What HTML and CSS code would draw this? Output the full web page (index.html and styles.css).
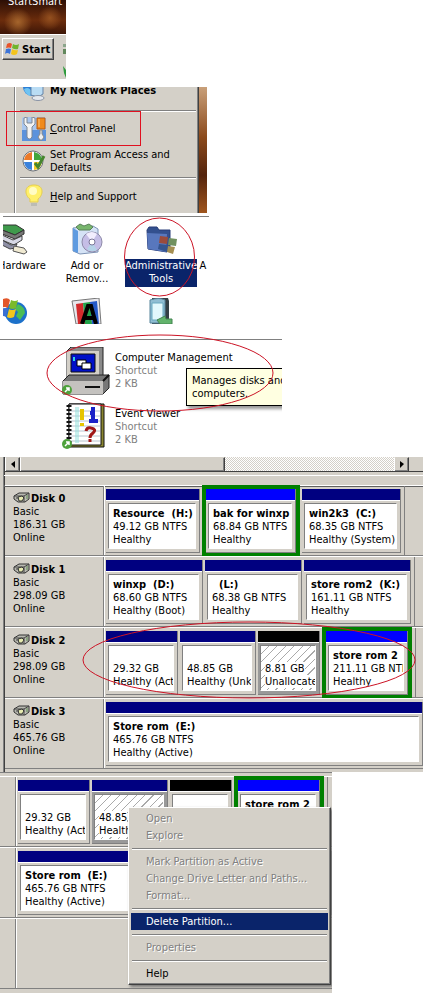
FILE: index.html
```html
<!DOCTYPE html>
<html lang="en">
<head>
	<meta charset="UTF-8">
	<meta name="viewport" content="width=device-width, initial-scale=1">
	<title>Delete Partition</title>
	<link rel="stylesheet" href="styles.css">
</head>
<body>
	<svg class="defs" aria-hidden="true">
		<symbol id="disk" viewBox="0 0 17 11">
			<path d="M1 4L6 1h10v6l-4 3H5L1 7z" fill="#b8b8b0" stroke="#333"/>
			<path d="M1 4h10l5-3M11 4v6M3 6h5" fill="none" stroke="#444"/>
			<path d="M5 5l4-1 2 2-2 3H6z" fill="#e6eab0" stroke="#333"/>
			<path d="M14 3v4" stroke="#5c8a50"/>
		</symbol>
		<symbol id="shortcut" viewBox="0 0 10 10">
			<circle cx="5" cy="5" r="5" fill="#4ea23c"/>
			<path d="M3 7l4-4M4 3h3v3" fill="none" stroke="#fff" stroke-width="1.5"/>
		</symbol>
		<symbol id="flag" viewBox="0 0 16 14">
			<path d="M3 2q3-2 5 0L7 6Q5 5 2 6z" fill="#e8542c"/>
			<path d="M9 2q3 2 6 0l-1 5q-3 1-6-1z" fill="#6fb52c"/>
			<path d="M2 7q3-1 5 0l-1 5q-3-2-5 0z" fill="#3d74d8"/>
			<path d="M8 7q3 2 6 1l-1 4q-3 2-6 0z" fill="#f4c41c"/>
		</symbol>
	</svg>

	<!-- desktop and taskbar -->
	<section class="desktop">
		<div class="wallpaper"><span>StartSmart</span></div>
		<div class="taskbar">
			<button class="start"><svg width="16" height="14"><use href="#flag"/></svg>Start</button>
			<svg class="tray" width="4" height="38" viewBox="0 0 4 38">
				<path d="M1 2h3v3H1z" fill="#8ba58b"/><path d="M1 7h3v5H1z" fill="#62885c"/>
				<path d="M1 24l3 4v8L2 31z" fill="#2f9b3e"/>
			</svg>
		</div>
	</section>

	<!-- start menu -->
	<section class="startmenu">
		<nav class="places">
			<a class="network" href="#">
				<svg width="24" height="24" viewBox="0 0 24 24">
					<circle cx="10" cy="9" r="9" fill="#2c7fd6"/><path d="M2 11q5-3 8 3l-2 4Q3 16 2 11z" fill="#6fc3f2"/>
					<path d="M9 8h12v8l-5 3-7-2z" fill="#b9dcf4" stroke="#6483a8"/>
					<ellipse cx="16" cy="20" rx="6" ry="2.500" fill="#e4e8ee" stroke="#8a94a6"/>
				</svg>
				<span>My Network Places</span>
			</a>
			<hr>
			<a class="panel" href="#">
				<svg width="24" height="24" viewBox="0 0 24 24">
					<rect width="24" height="24" rx="2" fill="#a9c6ee"/><path d="M0 13h24v11H0z" fill="#5b92dc"/>
					<path d="M2 1v6l3 3v10q2 4 5 0V10l3-3V1l-3-1v6H5V0z" fill="#f3f3f3" stroke="#7f8894"/>
					<path d="M15 1h8v11h-8z" fill="#f08a1c" stroke="#b95d10"/><path d="M17 2v8" stroke="#ffc577"/>
					<path d="M18 13h2v4l2 3-2 3h-2l-2-3 2-3z" fill="#eee" stroke="#8a8a8a"/>
				</svg>
				<span><u>C</u>ontrol Panel</span>
			</a>
			<a class="access" href="#">
				<svg width="24" height="24" viewBox="0 0 24 24">
					<circle cx="11" cy="12" r="10" fill="#fff" stroke="#6b7076"/>
					<path d="M10 3v8H2q1-7 8-8z" fill="#ec7a28"/><path d="M12 3v8h8q-1-7-8-8z" fill="#40a63c"/>
					<path d="M2 13h8v8q-7-1-8-8z" fill="#3a82dc"/><path d="M12 13h8q-1 7-8 8z" fill="#f5c928"/>
					<path d="M13 14l3 4 6-11" fill="none" stroke="#46852f" stroke-width="3"/>
				</svg>
				<span>Set Program Access and Defaults</span>
			</a>
			<hr>
			<a class="help" href="#">
				<svg width="24" height="24" viewBox="0 0 24 24">
					<path d="M12 1c-11 0-9 11-4 14v3h8v-3c5-3 7-14-4-14z" fill="#fff06a" stroke="#e5cd4e"/>
					<circle cx="11" cy="7" r="4" fill="#fffcc4"/><path d="M9 19h6v3H9z" fill="#bcbcb4"/>
				</svg>
				<span><u>H</u>elp and Support</span>
			</a>
		</nav>
		<span class="mark-box"></span>
	</section>

	<!-- control panel folder -->
	<section class="folder">
		<div class="icons">
			<a class="item first" href="#">
				<svg width="32" height="32" viewBox="0 0 32 32">
					<path d="M4 2h14l8 5-9 5L4 7z" fill="#3f9a4c" stroke="#333"/><path d="M4 7l13 5 9-5v4l-9 5-13-5z" fill="#777" stroke="#333"/>
					<path d="M4 12l11 5 9-4v4l-8 5-12-5z" fill="#d7d8e5" stroke="#444"/>
					<path d="M4 17l9 5 6-1-2 4-5 1-8-4z" fill="#8f90a6" stroke="#444"/>
					<path d="M16 23l10 2 3 4-3 2-11-3z" fill="#f0ead2" stroke="#555"/>
				</svg>
				<span>Hardware</span>
			</a>
			<a class="item" href="#">
				<svg width="32" height="32" viewBox="0 0 32 32">
					<path d="M2 5l20-2 5 3v23L9 31l-7-3z" fill="#d5e3f6" stroke="#7d93b5"/><path d="M2 5l5 3v22l-5-2z" fill="#5f9be0"/>
					<path d="M5 4l4-3 4 2 5-2 4 3-3 3H8z" fill="#78b66d" stroke="#5a815a"/>
					<circle cx="21" cy="19" r="10" fill="#c5bee6" stroke="#8d89a8"/><path d="M21 19l-6-8q6-4 11 0z" fill="#f2eefe"/><path d="M21 19l5 8q-6 3-10-1z" fill="#b5d3e8"/>
					<circle cx="21" cy="19" r="3" fill="#fff" stroke="#7b7799"/>
				</svg>
				<span>Add or Remov...</span>
			</a>
			<a class="item wide" href="#">
				<svg width="32" height="32" viewBox="0 0 32 32">
					<path d="M2 7l2-3h8l2 3h11v19l-3 3L3 26z" fill="#33508f" stroke="#293d78"/><path d="M2 10l20 1-1 18-18-3z" fill="#5877bd"/>
					<path d="M15 13l8 1-1 7-8-1z" fill="#9a4b3c"/><path d="M24 15l8 1-1 7-8-1z" fill="#71915f"/>
					<path d="M14 21l8 1v7l-9-3z" fill="#35558f"/><path d="M23 23l7 1-2 7-6-2z" fill="#a58f52"/>
				</svg>
				<span class="selected">Administrative Tools</span>
			</a>
			<span class="next">A</span>
			<svg class="first" width="32" height="26" viewBox="0 0 32 26">
				<circle cx="17" cy="15" r="11" fill="#1c71ca"/><path d="M19 6q7 3 7 9l-5 7-4-4 2-4-3-3z" fill="#4bbd55"/>
				<path d="M4 1q5-2 7 1l-2 8q-3-2-7 0z" fill="#e2562a"/><path d="M12 2q4 2 7 0l-2 8q-3 2-7 0z" fill="#7aba2b"/>
				<path d="M2 11q5-2 7 0l-2 8q-3-2-6 0z" fill="#3a70d4"/><path d="M10 11q3 2 7 0l-2 8q-4 2-7 0z" fill="#f2c61d"/>
			</svg>
			<svg width="32" height="26" viewBox="0 0 32 26">
				<path d="M1 3l27-3 2 26H5z" fill="#e7e7ec" stroke="#777"/><path d="M5 6l7-1 2 21H7z" fill="#d32a2c"/>
				<path d="M12 5l7-1 2 22h-7z" fill="#22a34a"/><path d="M19 4l7-1 2 23h-7z" fill="#2459c8"/>
				<path d="M11 26l6-18h3l5 18M14 20h9" fill="none" stroke="#000" stroke-width="4"/>
			</svg>
			<svg width="32" height="26" viewBox="0 0 32 26">
				<path d="M7 0h16l1 3v23H7z" fill="#333f44"/><path d="M5 2q9-3 15 0v23H5z" fill="#8fbdd2" stroke="#57849b"/>
				<path d="M7 5h11v17H7z" fill="#e2f8fc" stroke="#69a9c0"/><path d="M12 22l8-4 1 3h6v5H15z" fill="#62b36c" stroke="#438450"/>
			</svg>
		</div>
		<svg class="mark-ring ring-tools" viewBox="0 0 72 80"><ellipse cx="36" cy="40" rx="35" ry="39"/></svg>
	</section>

	<!-- administrative tools -->
	<section class="tools">
		<a class="tool" href="#">
			<svg width="48" height="48" viewBox="0 0 48 48">
				<path d="M5 4l4-4h32v28l-4 4H5z" fill="#8a8a8a" stroke="#222"/><path d="M5 4h32v28H5z" fill="#d4d0c8"/>
				<path d="M9 7h24v18H9z" fill="#0010c8" stroke="#111"/><path d="M15 13h9v6h-9z" fill="#fff" stroke="#000"/>
				<path d="M20 16h9v6h-9z" fill="#fff" stroke="#000"/><path d="M12 10v4" stroke="#2bd1e8" stroke-width="2"/>
				<path d="M1 34l6-6h40v13l-6 6H1z" fill="#777" stroke="#222"/><path d="M1 34h40v13H1z" fill="#c4c2bf"/>
				<path d="M41 34l6-6M23 40h15" stroke="#111" stroke-width="2"/>
				<use href="#shortcut" y="38" width="10" height="10"/>
			</svg>
			<span><b>Computer Management</b>Shortcut<br>2 KB</span>
		</a>
		<a class="tool" href="#">
			<svg width="48" height="48" viewBox="0 0 48 48">
				<path d="M7 1h35v43H7z" fill="#8a8630" stroke="#111"/><path d="M7 1h32v41H7z" fill="#fff" stroke="#111"/>
				<path d="M8 8h30M8 13h30M8 18h30M8 23h30M8 28h30M8 33h30M8 38h30" stroke="#b8c4d0"/><path d="M14 4v36M16 4v36" stroke="#8ee0dc"/>
				<path d="M7 2v38" stroke="#111" stroke-width="5" stroke-dasharray="2 2"/>
				<path d="M20 6v11M20 20v3" stroke="#e6c400" stroke-width="4"/>
				<path d="M31 4v4M28 10h3v8M27 18h9" fill="none" stroke="#1a22c8" stroke-width="4"/>
				<path d="M24 28q1-4 5-3 6 1 2 5-3 2-3 5M28 36v3" fill="none" stroke="#a01818" stroke-width="3"/>
				<use href="#shortcut" y="36" width="10" height="10"/>
			</svg>
			<span><b>Event Viewer</b>Shortcut<br>2 KB</span>
		</a>
		<div class="tooltip">Manages disks and<br>computers.</div>
		<svg class="mark-ring ring-computer" viewBox="0 0 228 78"><ellipse cx="114" cy="39" rx="113" ry="38"/></svg>
	</section>

	<!-- disk management -->
	<section class="manager">
		<div class="scroll">
			<button class="arrow" aria-label="Scroll left"><svg width="4" height="7"><path d="M4 0v7L0 3z"/></svg></button>
			<span class="thumb"></span>
			<span class="track"></span>
			<button class="arrow" aria-label="Scroll right"><svg width="4" height="7"><path d="M0 0v7l4-4z"/></svg></button>
		</div>
		<div class="disk">
			<div class="label"><b><svg width="17" height="11"><use href="#disk"/></svg>Disk 0</b>Basic<br>186.31 GB<br>Online</div>
			<div class="parts disk0">
				<div class="part"><p><b>Resource&nbsp; (H:)</b>49.12 GB NTFS<br>Healthy</p></div>
				<div class="part logical"><p><b>bak for winxp</b>68.84 GB NTFS<br>Healthy</p></div>
				<div class="part"><p><b>win2k3&nbsp; (C:)</b>68.35 GB NTFS<br>Healthy (System)</p></div>
			</div>
		</div>
		<div class="disk">
			<div class="label"><b><svg width="17" height="11"><use href="#disk"/></svg>Disk 1</b>Basic<br>298.09 GB<br>Online</div>
			<div class="parts disk1">
				<div class="part"><p><b>winxp&nbsp; (D:)</b>68.60 GB NTFS<br>Healthy (Boot)</p></div>
				<div class="part"><p><b>&nbsp; (L:)</b>68.38 GB NTFS<br>Healthy</p></div>
				<div class="part"><p><b>store rom2&nbsp; (K:)</b>161.11 GB NTFS<br>Healthy</p></div>
			</div>
		</div>
		<div class="disk">
			<div class="label"><b><svg width="17" height="11"><use href="#disk"/></svg>Disk 2</b>Basic<br>298.09 GB<br>Online</div>
			<div class="parts disk2">
				<div class="part"><p><b>&nbsp;</b>29.32 GB<br>Healthy (Act</p></div>
				<div class="part"><p><b>&nbsp;</b>48.85 GB<br>Healthy (Unk</p></div>
				<div class="part free picked"><p><b>&nbsp;</b><span>8.81 GB</span><br><span>Unallocate</span></p></div>
				<div class="part logical"><p><b>store rom 2</b>211.11 GB NTFS<br>Healthy</p></div>
			</div>
			<svg class="mark-ring ring-disk" viewBox="0 0 334 79"><ellipse cx="167" cy="39" rx="166" ry="38"/></svg>
		</div>
		<div class="disk">
			<div class="label"><b><svg width="17" height="11"><use href="#disk"/></svg>Disk 3</b>Basic<br>465.76 GB<br>Online</div>
			<div class="parts disk3">
				<div class="part"><p><b>Store rom&nbsp; (E:)</b>465.76 GB NTFS<br>Healthy (Active)</p></div>
			</div>
		</div>
	</section>

	<!-- partition context menu -->
	<section class="delete">
		<div class="disk">
			<div class="label"></div>
			<div class="parts disk2">
				<div class="part"><p><b>&nbsp;</b>29.32 GB<br>Healthy (Act</p></div>
				<div class="part picked"><p><b>&nbsp;</b><span>48.85</span><br><span>Health</span></p></div>
				<div class="part free"><p></p></div>
				<div class="part logical"><p><b>store rom 2</b></p></div>
			</div>
		</div>
		<div class="disk">
			<div class="label"></div>
			<div class="parts disk3">
				<div class="part"><p><b>Store rom&nbsp; (E:)</b>465.76 GB NTFS<br>Healthy (Active)</p></div>
			</div>
		</div>
		<div class="disk"><div class="label"></div></div>
		<div class="menu">
			<button disabled>Open</button>
			<button disabled>Explore</button>
			<hr>
			<button disabled>Mark Partition as Active</button>
			<button disabled>Change Drive Letter and Paths...</button>
			<button disabled>Format...</button>
			<hr>
			<button class="active">Delete Partition...</button>
			<hr>
			<button disabled>Properties</button>
			<hr>
			<button>Help</button>
		</div>
	</section>
</body>
</html>
```
FILE: styles.css
```css
* {
	box-sizing: border-box;
}
body {
	margin: 0;
	background: #fff;
	color: #000;
	font: 11px/13px "DejaVu Sans Condensed", "DejaVu Sans", sans-serif;
}
section {
	position: relative;
	overflow: hidden;
}
a {
	color: inherit;
	text-decoration: none;
}
button {
	font: inherit;
	color: inherit;
}
svg {
	display: block;
	flex: none;
}
.defs {
	position: absolute;
	width: 0;
	height: 0;
}

/* red marker shapes */
.mark-box,
.mark-ring {
	position: absolute;
	pointer-events: none;
}
.mark-box {
	left: 6px;
	top: 24px;
	width: 135px;
	height: 35px;
	border: 1px solid #e01020;
}
.mark-ring {
	fill: none;
	stroke: #cc1426;
	z-index: 2;
}

/* desktop */
.desktop {
	width: 66px;
	margin-bottom: 8px;
}
.wallpaper {
	height: 34px;
	background:
		radial-gradient(circle at 18px 22px, #a5652c, transparent 14px),
		radial-gradient(circle at 50px 18px, #94501f, transparent 12px),
		linear-gradient(#2c0f06, #6b2c0c 60%, #3d1607);
	color: #fff;
	text-align: center;
	overflow: hidden;
}
.wallpaper span {
	display: block;
	margin: 0 -8px 0 -4px;
	line-height: 3px;
}
.taskbar {
	display: flex;
	justify-content: space-between;
	height: 45px;
	padding: 3px 0 0 2px;
	background: #d4d0c8;
	border-top: 1px solid #fff;
}
.start {
	display: flex;
	align-items: center;
	gap: 2px;
	width: 52px;
	height: 22px;
	padding: 0 1px;
	background: #d4d0c8;
	border: 1px solid;
	border-color: #fff #404040 #404040 #fff;
	box-shadow: inset -1px -1px #808080;
	font-weight: bold;
}
.tray {
	margin-top: 4px;
}

/* start menu */
.startmenu {
	width: 207px;
	height: 126px;
	padding: 0 8px 0 14px;
	background: linear-gradient(#c9a07a, #8b4a1c 40%, #54240d 70%, #a0561e);
}
.startmenu::before {
	content: "";
	position: absolute;
	inset: 0 9px 0 0;
	background: #d4d0c8;
}
.places {
	position: relative;
	height: 100%;
	padding: 0 2px 0 5px;
	background: #d4d0c8;
	border-left: 1px solid #808080;
	border-right: 1px solid #404040;
	box-shadow: inset 1px 0 #fff, inset -1px 0 #808080;
}
.places a {
	display: flex;
	align-items: center;
	gap: 4px;
	padding-left: 2px;
	height: 34px;
}
.places .network {
	height: 23px;
	align-items: flex-start;
	font-weight: bold;
}
.network span {
	margin-top: -3px;
}
.network svg {
	margin-top: -9px;
}
.places .panel {
	height: 33px;
}
.places .access {
	height: 32px;
}
.access span {
	width: 128px;
}
hr {
	margin: 0;
	border: 0;
	border-top: 1px solid #808080;
	border-bottom: 1px solid #fff;
}

/* control panel folder */
.folder {
	width: 209px;
	height: 111px;
	padding: 3px 0 0 3px;
}
.icons {
	display: grid;
	grid-template-columns: 46px 76px 72px 12px;
	grid-template-rows: 70px 26px;
	row-gap: 5px;
	justify-items: center;
	padding-top: 6px;
	border-top: 1px solid #808080;
	overflow: hidden;
}
.item {
	display: flex;
	flex-direction: column;
	align-items: center;
	gap: 4px;
	width: 48px;
	text-align: center;
}
.item.wide {
	width: 72px;
}
.item span {
	padding-bottom: 2px;
}
.item.first {
	align-items: flex-start;
}
.first svg,
svg.first {
	justify-self: start;
	margin-left: -4px;
}
.first span {
	margin-left: -4px;
}
.selected {
	width: 72px;
	background: #0a246a;
	color: #fff;
}
.next {
	padding-top: 36px;
}
.ring-tools {
	left: 123px;
	top: 4px;
	width: 73px;
	height: 80px;
}

/* administrative tools */
.tools {
	width: 282px;
	height: 123px;
	margin-top: 10px;
	padding: 13px 0 0 62px;
	background: linear-gradient(#808080, #808080) 0 5px / 100% 1px no-repeat;
}
.tool {
	display: flex;
	gap: 5px;
	height: 56px;
	color: #808080;
}
.tool span {
	padding-top: 4px;
}
.tool b {
	display: block;
	color: #000;
	font-weight: normal;
}
.tooltip {
	position: absolute;
	left: 186px;
	top: 34px;
	width: 130px;
	padding: 5px;
	background: #ffffe1;
	border: 1px solid #000;
	box-shadow: 2px 3px 3px #999;
	white-space: nowrap;
}
.ring-computer {
	left: 46px;
	top: 0;
	width: 228px;
	height: 78px;
}

/* disk management */
.manager {
	height: 315px;
	padding-left: 2px;
	background: #d4d0c8;
	border-left: 3px solid #d4d0c8;
	box-shadow: inset 1px 0 #808080, inset 2px 0 #404040;
}
.scroll {
	display: flex;
	height: 15px;
	padding-right: 14px;
}
.arrow {
	display: flex;
	align-items: center;
	justify-content: center;
	width: 15px;
	padding: 0;
}
.arrow,
.thumb {
	background: #d4d0c8;
	border: 1px solid;
	border-color: #d4d0c8 #404040 #404040 #fff;
	box-shadow: inset -1px -1px #808080;
}
.thumb {
	width: 205px;
}
.track {
	flex: 1;
	background: repeating-conic-gradient(#fff 0 25%, #d4d0c8 0 50%) 0 0 / 2px 2px;
}
.scroll + .disk {
	margin-top: 13px;
}
.scroll::after {
	content: "";
	position: absolute;
	left: 1px;
	right: 0;
	top: 14px;
	height: 13px;
	border-top: 1px solid #404040;
	border-bottom: 2px solid #606060;
	background: linear-gradient(#fff, #fff) 0 2px / 100% 1px no-repeat;
	background-position-y: 3px;
}
.disk {
	position: relative;
	display: flex;
	height: 71px;
	border-top: 1px solid #fff;
	border-bottom: 1px solid #808080;
}
.label {
	flex: none;
	width: 99px;
	padding: 6px 0 0 8px;
	border-right: 1px solid #808080;
	box-shadow: 1px 0 #fff;
}
.label b {
	display: flex;
}
.label svg {
	margin-right: 1px;
}
.parts {
	display: grid;
	gap: 2px;
	height: 69px;
	padding: 3px 3px 2px 2px;
	border-right: 1px solid #808080;
}
.disk0 {
	grid-template-columns: 94px 98px 99px;
}
.disk1 {
	grid-template-columns: 97px 97px 107px;
}
.disk2 {
	grid-template-columns: 72px 76px 62px 90px;
}
.disk3 {
	flex: 1;
	padding-right: 0;
	border-right: 0;
}
.part {
	display: flex;
	flex-direction: column;
	min-width: 0;
	padding: 0 3px 3px 2px;
	border-right: 1px solid #808080;
	border-bottom: 1px solid #808080;
	box-shadow: inset 0 12px #fff;
}
.part::before {
	content: "";
	height: 11px;
	margin: 0 -3px 3px -2px;
	background: #000080;
}
.part p {
	flex: 1;
	margin: 0;
	padding: 3px 0 0 4px;
	background-color: #fff;
	border: 1px solid #fff;
	border-left-color: #808080;
	border-top-color: #808080;
	overflow: hidden;
	white-space: nowrap;
}
.part b {
	display: block;
}
.part.logical {
	margin: 0 4px;
	outline: 4px solid #008000;
}
.logical::before {
	background: #0000ff;
}
.free::before {
	background: #000;
}
.part.picked {
	background: #999;
}
.picked p {
	background-image: repeating-linear-gradient(135deg, transparent 0 5px, #aaa 5px 6px);
}
.picked span {
	background: #fff;
}
.manager .ring-disk {
	left: 77px;
	top: -7px;
	width: 334px;
	height: 79px;
}

/* context menu */
.delete {
	width: 332px;
	height: 221px;
	padding-top: 3px;
	background: #d4d0c8;
	border-top: 1px solid #808080;
}
.delete .label {
	width: 16px;
	padding: 0;
}
.menu {
	position: absolute;
	left: 128px;
	top: 34px;
	width: 203px;
	padding: 2px;
	background: #d4d0c8;
	border: 1px solid;
	border-color: #fff #404040 #404040 #fff;
	box-shadow: inset -1px -1px #808080, 2px 2px 3px #777;
}
.menu button {
	display: block;
	width: 100%;
	height: 17px;
	padding: 0 0 0 15px;
	background: none;
	border: 0;
	text-align: left;
}
.menu button:disabled {
	color: #808080;
	text-shadow: 1px 1px #fff;
}
.menu .active {
	background: #0a246a;
	color: #fff;
}
.menu hr {
	margin: 4px 1px 3px;
}
```
